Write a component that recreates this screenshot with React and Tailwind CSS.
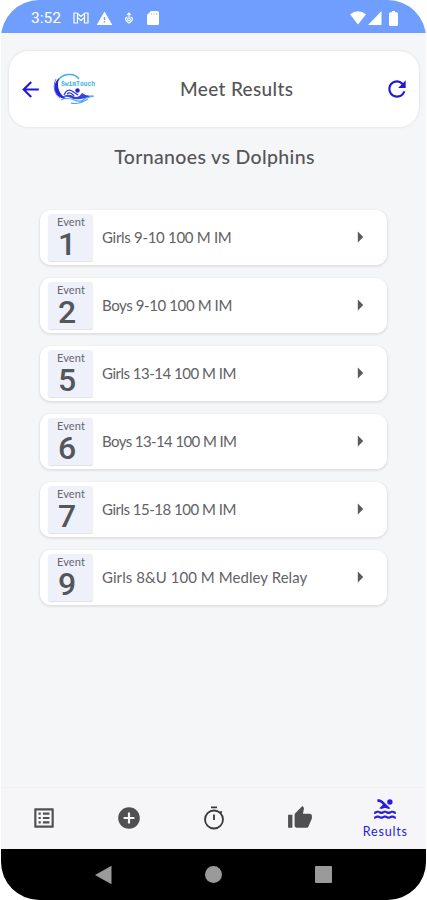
import {
  MdArrowBack, MdRefresh, MdArrowRight, MdListAlt, MdAddCircle,
  MdThumbUp, MdPool, MdWarning,
} from "react-icons/md";

const events = [
  { number: 1, name: "Girls 9-10 100 M IM", tracking: "tracking-[-0.3px]" },
  { number: 2, name: "Boys 9-10 100 M IM", tracking: "tracking-[-0.4px]" },
  { number: 5, name: "Girls 13-14 100 M IM", tracking: "tracking-[-0.5px]" },
  { number: 6, name: "Boys 13-14 100 M IM", tracking: "tracking-[-0.6px]" },
  { number: 7, name: "Girls 15-18 100 M IM", tracking: "tracking-[-0.5px]" },
  { number: 9, name: "Girls 8&U 100 M Medley Relay", tracking: "tracking-[0.06px]" },
];

function StatusBar() {
  return (
    <div className="flex h-[33px] shrink-0 items-center bg-[#709eff] pl-[30px] pr-[28px] pt-[3px] font-[Roboto,sans-serif] text-white">
      <span className="w-[30px] pt-px text-[15.5px] leading-none">3:52</span>
      <svg className="ml-[12px] h-[12px] w-[16px]" viewBox="0 0 16 12" fill="none" stroke="currentColor" strokeWidth="1.2">
        <path d="M1 1h3l4 3.500L12 1h3v10h-3.500V5.500L8 8.500 4.500 5.500V11H1zM4.500 5.500V2M11.500 5.500V2" />
      </svg>
      <MdWarning className="ml-[7px] h-[17px] w-[17px]" />
      <svg className="ml-[11px] h-[12px] w-[10px]" viewBox="0 0 10 13" fill="none" stroke="currentColor" strokeWidth="1.2">
        <path d="M5 6V1.200M3 3.200 5 1.200l2 2M3.300 5.500C0 6.500.8 9.500 5 12c4.200-2.500 5-5.500 1.700-6.500" />
        <circle cx="5" cy="8" r="1.500" />
      </svg>
      <svg className="ml-[13px] h-[14px] w-[12px]" viewBox="0 0 12 14">
        <path d="M4 0h6.500Q12 0 12 1.500v11Q12 14 10.500 14h-9Q0 14 0 12.500V4z" fill="currentColor" />
        <path d="M4.500 2v2M7 2v2M9.500 2v2" stroke="#c3d6ff" strokeWidth="1" />
      </svg>
      <div className="ml-auto flex items-center">
        <svg className="h-[14px] w-[16px]" viewBox="0 0 16 14" fill="currentColor"><path d="M0 3.300Q8-2.700 16 3.300L8 13.500z" /></svg>
        <svg className="ml-[2px] h-[14px] w-[14px]" viewBox="0 0 14 14" fill="currentColor"><path d="M13.500 0v14H0z" /></svg>
        <svg className="ml-[7px] h-[15px] w-[9px]" viewBox="0 0 9 15" fill="currentColor"><path d="M3 0h3v1.200h1.500Q9 1.200 9 2.700V13.500Q9 15 7.500 15h-6Q0 15 0 13.500V2.700Q0 1.200 1.500 1.200H3z" /></svg>
      </div>
    </div>
  );
}

function SwimTouchLogo() {
  return (
    <svg className="h-[32px] w-[44px] overflow-visible" viewBox="0 0 44 32" fill="none">
      <path d="M5 8C8 1 21-1.500 26 6" stroke="#42aeea" strokeWidth="1.500" />
      <path d="M6 5C-3 13 2 26 14 26 7 22 3 15 6 5z" fill="#2525dc" />
      <path d="M3 6C-1 14 2 22 7 25" stroke="#7770df" strokeWidth="1" />
      <text x="8" y="13" fill="#38afe8" className="font-['Liberation_Mono',monospace] text-[8px] font-bold" textLength="34" lengthAdjust="spacingAndGlyphs">SwimTouch</text>
      <path d="M11 22q3-7 8-4l6 4M14 21q3-3 7 2" stroke="#2f35df" strokeWidth="1.300" />
      <circle cx="24.500" cy="17.500" r="2.200" fill="#2020d5" />
      <path d="M9 24q6-4 11-1t9-3q5 4 12 2-7 3-13 4-7 1-10-1t-9-1z" fill="#3445df" />
      <path d="M8 27q6-3 13 0t12-2l8-2M18 30q7 2 17-4" stroke="#4da5ee" strokeWidth="1.100" />
    </svg>
  );
}

function Header() {
  return (
    <header className="ml-[8px] mr-[7px] mt-[18px] flex h-[76px] shrink-0 items-center rounded-[20px] bg-white px-[9px] shadow-[0_0_2px_1px_#e7e7e9]">
      <MdArrowBack className="h-[25px] w-[25px] text-[#2118da]" />
      <div className="ml-[10px]"><SwimTouchLogo /></div>
      <h1 className="-mt-[2px] ml-[83px] whitespace-nowrap text-[19px] font-medium leading-none tracking-[0.35px]">Meet Results</h1>
      <MdRefresh className="ml-auto h-[26px] w-[26px] text-[#2118da]" />
    </header>
  );
}

function EventRow({ event }) {
  return (
    <li className="flex h-[55px] items-center rounded-[11px] bg-white pl-[8px] pr-[14px] shadow-[0_1px_2px_1px_#e2e2e4]">
      <div className="flex h-[47px] w-[45px] flex-col rounded-[3px] bg-[#eef1fa] pt-[2px] shadow-[0_1px_1px_#dfe1e8]">
        <span className="pl-[9px] text-[11px] leading-[12px] tracking-[0.1px] text-[#66676d]">Event</span>
        <span className="pl-[10px] font-[Roboto,sans-serif] text-[32px] font-medium leading-[33px] text-[#54565d]">{event.number}</span>
      </div>
      <span className={`ml-[9px] -mt-[2px] whitespace-nowrap text-[15px] leading-5 text-[#626265] ${event.tracking}`}>{event.name}</span>
      <MdArrowRight className="-mt-px ml-auto h-[26px] w-[26px] text-[#5a5a5c]" />
    </li>
  );
}

function StopwatchIcon() {
  return (
    <svg className="h-[26px] w-[26px]" viewBox="0 0 26 26" fill="none" stroke="#38383b" strokeWidth="1.8">
      <circle cx="13" cy="14.500" r="9" />
      <path d="M10 2.300h6M13 9.500v5.500M19 8l1.700-1.700" />
    </svg>
  );
}

function TabBar() {
  return (
    <nav className="-mr-[2px] grid h-[62px] shrink-0 grid-cols-5 items-center justify-items-center border-t border-[#f2f2f4] bg-[#f6f6f9] pb-[2px] text-[#505053]">
      <MdListAlt className="h-[26px] w-[26px]" />
      <MdAddCircle className="h-[26px] w-[26px]" />
      <StopwatchIcon />
      <MdThumbUp className="h-[26px] w-[26px]" />
      <div className="flex flex-col items-center pt-[2px] text-[#241ce0]">
        <MdPool className="h-[26px] w-[26px]" />
        <span className="text-[12.5px] leading-[19px] tracking-[0.8px]">Results</span>
      </div>
    </nav>
  );
}

function SystemBar() {
  return (
    <div className="flex h-[51px] shrink-0 items-center bg-black pl-[94px] text-[#9a9a9a]">
      <svg className="h-[20px] w-[17px]" viewBox="0 0 17 20" fill="currentColor"><path d="M0 10 16.500.8v18.400z" /></svg>
      <div className="ml-[93px] h-[17px] w-[17px] rounded-full bg-[#9a9a9a]" />
      <div className="ml-[93px] h-[17px] w-[17px] rounded-[1px] bg-[#9a9a9a]" />
    </div>
  );
}

export default function App() {
  return (
    <div className="h-[900px] w-[427px] bg-white px-px font-[Lato,sans-serif] text-[#555558]">
      <div className="flex h-full flex-col overflow-hidden rounded-[38px] bg-[#f5f6f8]">
        <StatusBar />
        <Header />
        <main className="flex-1">
          <h2 className="mt-[17px] whitespace-nowrap pl-[2px] text-center text-[19.500px] font-medium leading-[26px] tracking-[0.35px]">Tornanoes vs Dolphins</h2>
          <ul className="mx-[39px] mt-[40px] flex flex-col gap-[13px]">
            {events.map((event) => <EventRow key={event.number} event={event} />)}
          </ul>
        </main>
        <TabBar />
        <SystemBar />
      </div>
    </div>
  );
}
